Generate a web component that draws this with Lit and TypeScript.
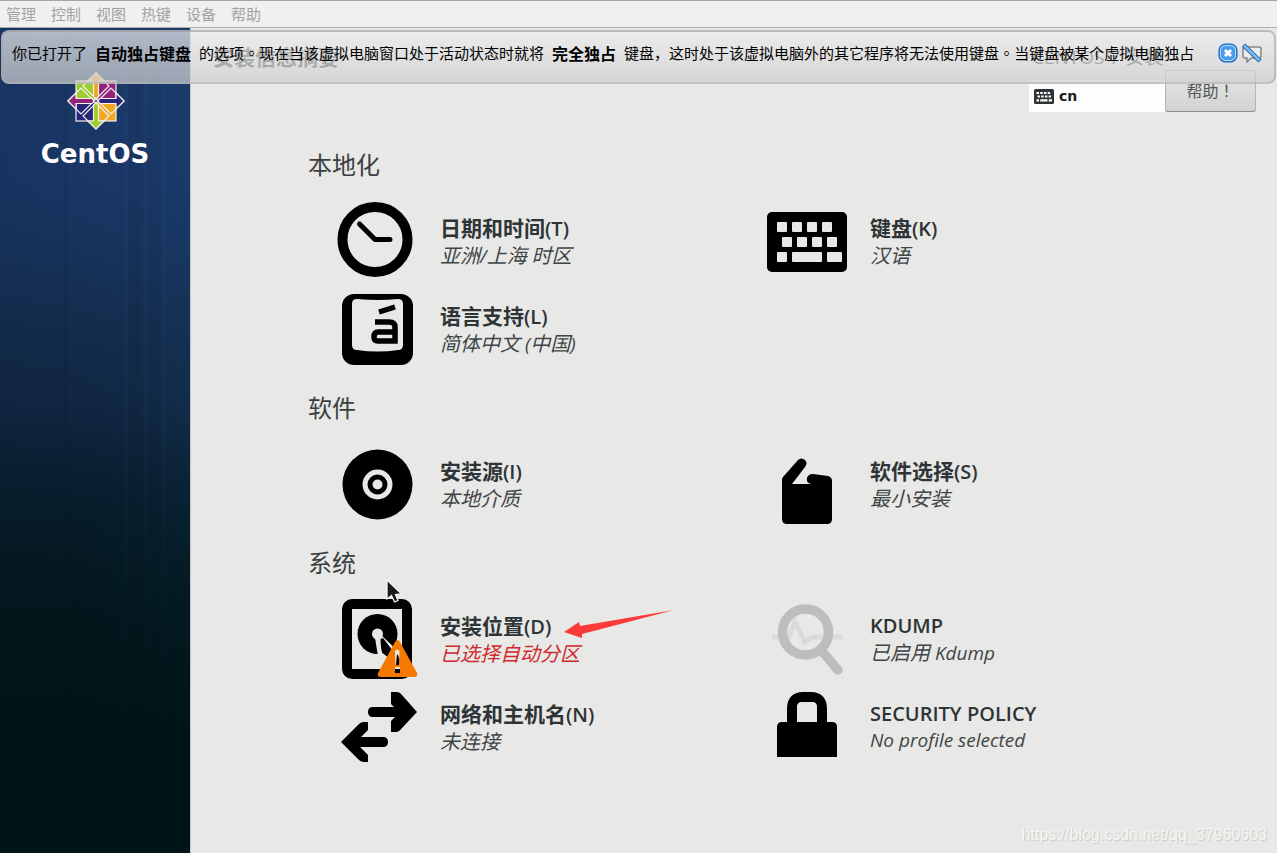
import { LitElement, html, css, svg, nothing } from "lit";
import { customElement, property } from "lit/decorators.js";

type IconName = "clock" | "keyboard" | "language" | "disc" | "package" | "drive" | "network" | "kdump" | "lock";

interface Spoke {
  icon: IconName;
  title: string;
  status: string;
  warning?: boolean;
}

const SECTIONS: { heading: string; spokes: Spoke[] }[] = [
  {
    heading: "本地化",
    spokes: [
      { icon: "clock", title: "日期和时间(T)", status: "亚洲/上海 时区" },
      { icon: "keyboard", title: "键盘(K)", status: "汉语" },
      { icon: "language", title: "语言支持(L)", status: "简体中文 (中国)" },
    ],
  },
  {
    heading: "软件",
    spokes: [
      { icon: "disc", title: "安装源(I)", status: "本地介质" },
      { icon: "package", title: "软件选择(S)", status: "最小安装" },
    ],
  },
  {
    heading: "系统",
    spokes: [
      { icon: "drive", title: "安装位置(D)", status: "已选择自动分区", warning: true },
      { icon: "kdump", title: "KDUMP", status: "已启用 Kdump" },
      { icon: "network", title: "网络和主机名(N)", status: "未连接" },
      { icon: "lock", title: "SECURITY POLICY", status: "No profile selected" },
    ],
  },
];

const BG = "#e8e8e6";

const ICONS = {
  clock: svg`
    <circle cx="38" cy="37.5" r="32.5" fill="none" stroke="#000" stroke-width="10"/>
    <path d="M22.500 22 L38 37.5 H53" fill="none" stroke="#000" stroke-width="5" stroke-linecap="round" stroke-linejoin="round"/>`,
  keyboard: svg`
    <rect x="0" y="10" width="80" height="60" rx="5"/>
    <g fill=${BG}>
      <rect x="10" y="20" width="10" height="10" rx="1"/><rect x="25" y="20" width="10" height="10" rx="1"/>
      <rect x="40" y="20" width="10" height="10" rx="1"/><rect x="55" y="20" width="10" height="10" rx="1"/>
      <rect x="15" y="35" width="10" height="10" rx="1"/><rect x="30" y="35" width="10" height="10" rx="1"/>
      <rect x="45" y="35" width="10" height="10" rx="1"/><rect x="60" y="35" width="10" height="10" rx="1"/>
      <rect x="10" y="50" width="10" height="10" rx="1"/><rect x="25" y="50" width="30" height="10" rx="1"/>
      <rect x="60" y="50" width="15" height="10" rx="1"/>
    </g>`,
  language: svg`
    <rect x="5" y="4" width="71" height="71" rx="12"/>
    <path d="M20 9 Q41 11 61 9 Q66 9 66 14 V55 Q66 60 61 60 Q41 63 20 60 Q15 60 15 55 V14 Q15 9 20 9 Z" fill=${BG}/>
    <path d="M38 32 H52 Q58 32 58 37 V51 H41 Q37 51 37 47 Q37 42 41 42 H58" fill="none" stroke="#000" stroke-width="5.500"/>
    <path d="M42 22 L58 17" stroke="#000" stroke-width="5"/>`,
  disc: svg`
    <circle cx="40.5" cy="39.5" r="35"/>
    <circle cx="40.5" cy="39.5" r="15" fill=${BG}/>
    <circle cx="40.5" cy="39.5" r="7.5" fill="none" stroke="#000" stroke-width="5"/>`,
  package: svg`
    <path d="M15 35 Q15 33 16 32 L31 15 Q34 12 38 15 Q41 18 38 22 L25 39 H44 Q39 38 40 33 Q41 29 46 29 L61 31 Q65 32 65 36 V74 Q65 79 60 79 H20 Q15 79 15 74 Z"/>`,
  drive: svg`
    <rect x="5" y="-1" width="70" height="80" rx="10"/>
    <rect x="15" y="9" width="50" height="60" fill=${BG}/>
    <circle cx="40.500" cy="34" r="20"/>
    <circle cx="40.500" cy="34" r="5.500" fill=${BG}/>
    <path d="M39 36 L44 35 L62 52 L54 62 L44 58 Z" fill=${BG}/>
    <path d="M43.500 39 L46 38 L56 51 L52 58 L44 52 Z"/>
    <path d="M38 38 L42 38 L46 57 L41 56 Z" fill=${BG}/>
    <path d="M58 42 Q60.500 38 63 42 L80 73 Q81 77 77 77 H44 Q39.500 77 41 73 Z" fill="#f57900"/>
    <path d="M58 51 Q60 48 62.500 51 L62 65 H58.500 Z" fill=${BG}/>
    <path d="M60 54 Q63 57 62 65 H59 Z"/>
    <rect x="58" y="67" width="5" height="2" fill=${BG}/><rect x="58" y="69" width="5" height="4"/>`,
  network: svg`
    <path d="M36 19 H57 L54 16 V4 H60 Q63 4 65 7 L80 24 L65 40 Q62 44 59 44 H54 V33 L58 29 H36 Q31 29 31 24 Q31 19 36 19 Z"/>
    <path d="M46 59 H23 L31 67 V74 H27 Q24 74 22 72 L4 54 L22 36 Q24 34 27 34 H31 V42 L24 49 H46 Q51 49 51 54 Q51 59 46 59 Z"/>`,
  kdump: svg`
    <path d="M5 37 H22 L28 22 L38 42 L44 38 L48 37 H75" fill="none" stroke="#dadad8" stroke-width="5"/>
    <circle cx="38.500" cy="32" r="23" fill="none" stroke="#bdbdbd" stroke-width="9.500"/>
    <path d="M54 50 L71 70" stroke="#bdbdbd" stroke-width="9.500" stroke-linecap="round"/>`,
  lock: svg`
    <path d="M25 36 V21 Q25 9 36 9 H44 Q55 9 55 21 V36" fill="none" stroke="#000" stroke-width="10"/>
    <path d="M10 69 V39 Q10 34 15 34 H65 Q70 34 70 39 V69 Z"/>
    <path d="M30 34 V19 Q30 14 35 14 H45 Q50 14 50 19 V34 Z" fill=${BG}/>`,
};

/** Splits a label into Latin and Chinese runs, each with its own face and size. */
const runs = (label: string) =>
  label
    .split(/([^\x00-\x7f]+)/)
    .filter(Boolean)
    .map((part) => (part.charCodeAt(0) > 127 ? html`<span class="cjk">${part}</span>` : part));

@customElement("hub-spoke")
class HubSpoke extends LitElement {
  @property({ attribute: false }) spoke!: Spoke;

  static styles = css`
    :host { display: block; }
    .spoke {
      position: relative;
      display: flex;
      align-items: center;
      gap: 23px;
      width: 100%;
      height: 88px;
      padding: 0;
      border: 0;
      background: none;
      color: #2e3436;
      text-align: left;
      white-space: nowrap;
      font-family: "Open Sans", "Noto Sans CJK SC", sans-serif;
    }
    .icon { flex: none; width: 80px; height: 80px; overflow: visible; }
    .text { display: flex; flex-direction: column; padding-bottom: 2px; }
    .title { font-size: 20px; line-height: 26px; font-weight: 600; }
    .status { font-size: 19px; line-height: 26px; font-style: italic; color: #3f4547; }
    .cjk { font-family: "Noto Sans CJK SC", sans-serif; }
    .title .cjk { font-size: 21px; font-weight: 700; }
    .status .cjk { font-size: 20px; }
    .warning { color: #d02a2e; }
    .pointer { position: absolute; left: 227px; top: 13px; width: 110px; height: 30px; }
  `;

  render() {
    const { icon, title, status, warning } = this.spoke;
    return html`<button class="spoke" type="button">
      <svg class="icon" viewBox="0 0 80 80" aria-hidden="true">${ICONS[icon]}</svg>
      <span class="text">
        <span class="title">${runs(title)}</span>
        <span class="status ${warning ? "warning" : ""}">${runs(status)}</span>
      </span>
      ${warning
        ? html`<svg class="pointer" viewBox="0 0 110 30" aria-hidden="true">
            <path d="M0 23 L15 13 L16 17 L110 1 L18 25 L18 29 Z" fill="#fb3a3a"/>
          </svg>`
        : nothing}
    </button>`;
  }
}

@customElement("app-root")
class AppRoot extends LitElement {
  static styles = css`
    :host {
      position: relative;
      display: flex;
      flex-direction: column;
      min-height: 100vh;
      overflow: hidden;
      background: #e8e8e6;
      color: #2e3436;
      font-family: "Open Sans", "Noto Sans CJK SC", sans-serif;
    }
    .menubar {
      display: flex;
      gap: 15px;
      box-sizing: border-box;
      height: 28px;
      padding: 0 6px;
      border-top: 1px solid #9ea8aa;
      border-bottom: 1px solid #acacac;
      background: #f0f0f0;
    }
    .menubar button {
      padding: 0;
      border: 0;
      background: none;
      color: #a2a2a2;
      font: 15px/24px "Noto Sans CJK SC", sans-serif;
    }
    .body { flex: 1; display: grid; grid-template-columns: 191px 1fr; }
    .sidebar {
      display: flex;
      flex-direction: column;
      align-items: center;
      box-sizing: border-box;
      padding-top: 44px;
      border-right: 1px solid #c4c8ca;
      background:
        linear-gradient(180deg, rgba(1,21,24,0) 45%, #011518 85%),
        linear-gradient(90deg, rgba(0,0,0,0) 62px, rgba(0,0,0,.05) 64px 66px, rgba(0,0,0,0) 70px 124px, rgba(120,170,220,.03) 127px, rgba(0,0,0,.06) 130px 142px, rgba(120,170,220,.03) 145px, rgba(0,0,0,.04) 149px 160px, rgba(120,170,220,.03) 164px, rgba(0,0,0,0) 168px),
        linear-gradient(95deg, rgba(10,20,40,.12), rgba(30,80,150,0) 50%, rgba(30,90,150,.14)),
        linear-gradient(180deg, #1a3a69 0, #1a3767 18%, #17335c 27%, #132c4c 37%, #10253f 49%, #0a2033 58%, #051a24 72%, #011518 100%);
    }
    .logo { width: 58px; height: 58px; margin-right: -2px; }
    .wordmark { margin-top: 8px; color: #fff; font: 700 26px/32px "DejaVu Sans", sans-serif; }
    .main { min-width: 0; }
    .header { display: flex; justify-content: space-between; padding: 17px 21px 19px 22px; }
    .header-title { margin: 0; font-size: 21px; line-height: 24px; font-weight: 700; }
    .product { display: flex; flex-direction: column; gap: 1px; }
    .product-name { padding-left: 3px; font-size: 19px; line-height: 24px; font-weight: 400; }
    .controls { display: flex; align-items: flex-end; }
    .layout {
      display: flex;
      align-items: center;
      gap: 5px;
      width: 136px;
      height: 32px;
      padding: 0 5px;
      box-sizing: border-box;
      border: 0;
      background: #fdfdfd;
      color: #1c2022;
      font: 700 14px/32px "DejaVu Sans", sans-serif;
    }
    .layout svg { width: 20px; height: 15px; }
    .help {
      box-sizing: border-box;
      width: 91px;
      height: 42px;
      padding: 0 0 3px;
      border: 1px solid #b4b4b2;
      border-bottom-color: #8c8e8c;
      border-radius: 3px;
      background: linear-gradient(#e6e6e4, #d2d2d0);
      color: #51575a;
      font: 16px/36px "Noto Sans CJK TC", sans-serif;
    }
    .hub { padding: 0 80px 0 117px; }
    .heading { margin: 0; padding: 15px 0 16px; font: 400 24px/36px "Noto Sans CJK SC", sans-serif; color: #3a4042; }
    .spokes { display: grid; grid-template-columns: 1fr 1fr; padding-left: 29px; }
    .banner {
      position: absolute;
      top: 30px;
      left: 1px;
      right: 1px;
      display: flex;
      align-items: center;
      justify-content: space-between;
      box-sizing: border-box;
      height: 54px;
      padding: 0 12px 8px 9px;
      border: 2px solid rgba(165,165,165,.6);
      border-radius: 8px;
      background: linear-gradient(rgba(237,237,237,.71), rgba(207,207,207,.71));
      color: #000;
      white-space: nowrap;
      font: 15px/24px "Noto Sans CJK SC", sans-serif;
    }
    .message { display: flex; gap: 8px; }
    .message b { font-size: 16px; }
    .stop { font-family: "Noto Sans CJK TC", sans-serif; }
    .actions { display: flex; gap: 4px; }
    .actions button { display: block; width: 20px; height: 20px; padding: 0; border: 0; background: none; }
    .actions svg { display: block; width: 20px; height: 20px; }
    .cursor { position: absolute; left: 386px; top: 579px; width: 17px; height: 26px; }
    .watermark {
      position: absolute;
      right: 10px;
      bottom: 8px;
      color: #f6f6f5;
      text-shadow: 1px 1px 1px #c8c8c6;
      text-decoration: none;
      font: 16px/20px "Liberation Sans", sans-serif;
    }
  `;

  private renderLogo() {
    return html`<svg class="logo" viewBox="0 0 58 58" role="img" aria-label="CentOS">
      <g stroke="#f3eff2" stroke-width="1.200">
        <rect x="9" y="9" width="19" height="19" fill="#9ccd2a"/>
        <rect x="30" y="9" width="19" height="19" fill="#932279"/>
        <rect x="9" y="30" width="19" height="19" fill="#262577"/>
        <rect x="30" y="30" width="19" height="19" fill="#efa724"/>
        <path d="M29 1 L42 14 L29 27 L16 14 Z" fill="none"/>
        <path d="M29 31 L42 44 L29 57 L16 44 Z" fill="none"/>
        <path d="M1 29 L14 16 L27 29 L14 42 Z" fill="none"/>
        <path d="M31 29 L44 16 L57 29 L44 42 Z" fill="none"/>
        <path d="M29 1 L37 9 H31.500 V25 L29 27 L26.500 25 V9 H21 Z" fill="#efa724"/>
        <path d="M57 29 L49 37 V31.500 H33 L31 29 L33 26.500 H49 V21 Z" fill="#262577"/>
        <path d="M29 57 L21 49 H26.500 V33 L29 31 L31.500 33 V49 H37 Z" fill="#9ccd2a"/>
        <path d="M1 29 L9 21 V26.500 H25 L27 29 L25 31.500 H9 V37 Z" fill="#932279"/>
      </g>
    </svg>`;
  }

  render() {
    return html`
      <nav class="menubar">
        ${["管理", "控制", "视图", "热键", "设备", "帮助"].map((m) => html`<button type="button">${m}</button>`)}
      </nav>
      <div class="body">
        <aside class="sidebar">
          ${this.renderLogo()}
          <span class="wordmark">CentOS</span>
        </aside>
        <main class="main">
          <header class="header">
            <h1 class="header-title">安装信息摘要</h1>
            <div class="product">
              <span class="product-name">CENTOS 7 安装</span>
              <div class="controls">
                <button class="layout" type="button">
                  <svg viewBox="0 0 20 15" aria-hidden="true">
                    <rect width="20" height="15" rx="1.500" fill="#2e3436"/>
                    <path d="M2.500 4 H17 M3.500 7.500 H18" stroke="#fff" stroke-width="2.200" stroke-dasharray="2.500 1.200"/>
                    <path d="M2.500 11.300 H5 M6.200 11.300 H13.500 M14.700 11.300 H18" stroke="#fff" stroke-width="2.200"/>
                  </svg>
                  cn
                </button>
                <button class="help" type="button">帮助！</button>
              </div>
            </div>
          </header>
          <div class="hub">
            ${SECTIONS.map(
              (s) => html`<section>
                <h2 class="heading">${s.heading}</h2>
                <div class="spokes">${s.spokes.map((k) => html`<hub-spoke .spoke=${k}></hub-spoke>`)}</div>
              </section>`,
            )}
          </div>
        </main>
      </div>
      <div class="banner" role="status">
        <div class="message">
          <span>你已打开了</span><b>自动独占键盘</b>
          <span>的选项<span class="stop">。</span>现在当该虚拟电脑窗口处于活动状态时就将</span><b>完全独占</b>
          <span>键盘，这时处于该虚拟电脑外的其它程序将无法使用键盘<span class="stop">。</span>当键盘被某个虚拟电脑独占</span>
        </div>
        <div class="actions">
          <button type="button" aria-label="关闭">
            <svg viewBox="0 0 20 20">
              <rect x="1" y="1" width="18" height="18" rx="6" fill="#2a86e0" stroke="#1767bd"/>
              <rect x="2.500" y="2.500" width="15" height="15" rx="5" fill="#4b9bec" stroke="#c5e2fb"/>
              <path d="M7 7 L13 13 M13 7 L7 13" stroke="#fff" stroke-width="3"/>
            </svg>
          </button>
          <button type="button" aria-label="不再显示">
            <svg viewBox="0 0 20 20">
              <path d="M3 4 H17 Q19 4 19 6 V13 Q19 15 17 15 H9 L5 19 V15 H3 Q1 15 1 13 V6 Q1 4 3 4 Z" fill="#ececec" stroke="#858585" stroke-width="1.500"/>
              <path d="M1.500 2 L18 18" stroke="#1b5ea8" stroke-width="4.500"/>
              <path d="M2 2.500 L17.500 17.500" stroke="#7dbcf5" stroke-width="2.500"/>
            </svg>
          </button>
        </div>
      </div>
      <svg class="cursor" viewBox="0 0 17 26" aria-hidden="true">
        <path d="M1 1 V20 L5.500 16.500 L8.500 23 L12 21.500 L9.500 15.500 L15.500 15 Z" fill="#1a1a1a" stroke="#f4f4f4" stroke-width="1.300"/>
      </svg>
      <a class="watermark" href="https://blog.csdn.net/qq_37960603">https://blog.csdn.net/qq_37960603</a>
    `;
  }
}
